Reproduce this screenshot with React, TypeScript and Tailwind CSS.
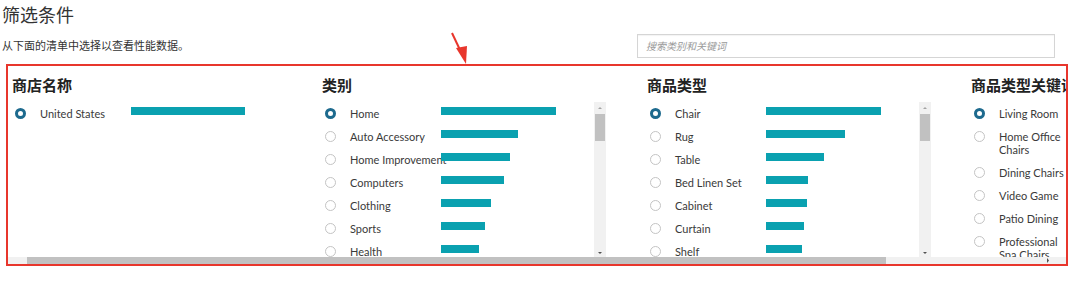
import React from 'react'

type Item = { label: string; bar: number; checked?: boolean }

type Column = {
  title: string
  width: string
  scroll: boolean
  wrap?: boolean
  items: Item[]
}

const COLUMNS: Column[] = [
  {
    title: '商店名称',
    width: 'w-[310px]',
    scroll: false,
    items: [{ label: 'United States', bar: 114, checked: true }],
  },
  {
    title: '类别',
    width: 'w-[325px]',
    scroll: true,
    items: [
      { label: 'Home', bar: 115, checked: true },
      { label: 'Auto Accessory', bar: 77 },
      { label: 'Home Improvement', bar: 69 },
      { label: 'Computers', bar: 63 },
      { label: 'Clothing', bar: 50 },
      { label: 'Sports', bar: 44 },
      { label: 'Health', bar: 38 },
      { label: 'Beauty', bar: 34 },
    ],
  },
  {
    title: '商品类型',
    width: 'w-[324px]',
    scroll: true,
    items: [
      { label: 'Chair', bar: 115, checked: true },
      { label: 'Rug', bar: 79 },
      { label: 'Table', bar: 58 },
      { label: 'Bed Linen Set', bar: 42 },
      { label: 'Cabinet', bar: 41 },
      { label: 'Curtain', bar: 38 },
      { label: 'Shelf', bar: 36 },
      { label: 'Lamp', bar: 32 },
    ],
  },
  {
    title: '商品类型关键词',
    width: 'w-[240px]',
    scroll: false,
    wrap: true,
    items: [
      { label: 'Living Room', bar: 115, checked: true },
      { label: 'Home Office Chairs', bar: 80 },
      { label: 'Dining Chairs', bar: 60 },
      { label: 'Video Game', bar: 50 },
      { label: 'Patio Dining', bar: 44 },
      { label: 'Professional Spa Chairs', bar: 38 },
    ],
  },
]

function Radio({ checked }: { checked?: boolean }) {
  return checked ? (
    <span className="mt-[1px] block h-[11px] w-[11px] shrink-0 rounded-full border-[3px] border-[#1d6a8e] bg-white" />
  ) : (
    <span className="mt-[1px] block h-[11px] w-[11px] shrink-0 rounded-full border border-[#c4c4c4] bg-white" />
  )
}

function VScroll() {
  return (
    <div className="flex w-[12px] shrink-0 flex-col items-center bg-[#f1f1f1]">
      <svg width="6" height="12" viewBox="0 0 6 12" className="shrink-0">
        <path d="M1 7 L3 5 L5 7 Z" fill="#a3a3a3" />
      </svg>
      <div className="h-[27px] w-[10px] bg-[#c1c1c1]" />
      <div className="flex-1" />
      <svg width="6" height="12" viewBox="0 0 6 12" className="shrink-0">
        <path d="M1 5 L3 7 L5 5 Z" fill="#505050" />
      </svg>
    </div>
  )
}

function List({ col }: { col: Column }) {
  return (
    <div className="flex h-[157px] overflow-hidden">
      <div className="flex w-[272px] shrink-0 flex-col overflow-hidden">
        {col.items.map((it) => (
          <div key={it.label} className="flex shrink-0 items-start py-[5px] pl-[3px]">
            <Radio checked={it.checked} />
            <span
              className={
                col.wrap
                  ? 'ml-[14px] w-[72px] shrink-0 text-[11px] leading-[13px] text-[#3a3a3a]'
                  : 'ml-[14px] w-[91px] shrink-0 whitespace-nowrap text-[11px] leading-[13px] text-[#3a3a3a]'
              }
              style={{ fontFamily: 'Lato, "Open Sans", sans-serif' }}
            >
              {it.label}
            </span>
            <div className="h-[8px] shrink-0 bg-[#0aa1b0]" style={{ width: it.bar }} />
          </div>
        ))}
      </div>
      {col.scroll && <VScroll />}
    </div>
  )
}

export default function App() {
  return (
    <div
      className="relative h-[289px] w-[1080px] overflow-hidden bg-white px-[2px] pt-[4px]"
      style={{ fontFamily: '"Open Sans", "Noto Sans CJK SC", sans-serif' }}
    >
      {/* Header */}
      <h1 className="text-[18px] leading-[22px] font-normal text-[#333]">筛选条件</h1>

      <div className="mt-[8px] flex h-[24px] items-center">
        <p className="text-[11px] text-[#333]">从下面的清单中选择以查看性能数据。</p>
        <div className="ml-auto mr-[23px] flex h-[24px] w-[418px] items-center border border-[#d5d5d5] px-[8px] shadow-[inset_0_1px_1px_rgba(0,0,0,0.05)]">
          <span className="text-[10px] italic text-[#9a9a9a]">搜索类别和关键词</span>
        </div>
      </div>

      {/* Filter box */}
      <div className="mt-[6px] ml-[4px] flex h-[202px] w-[1062px] flex-col overflow-hidden border-2 border-[#e8362c]">
        <div className="flex flex-1 overflow-hidden pl-[4px] pt-[9px]">
          {COLUMNS.map((col) => (
            <div key={col.title} className={`${col.width} shrink-0`}>
              <h2 className="whitespace-nowrap text-[15px] leading-[20px] font-bold text-[#222]">
                {col.title}
              </h2>
              <div className="mt-[7px]">
                <List col={col} />
              </div>
            </div>
          ))}
        </div>
        {/* horizontal scrollbar */}
        <div className="flex h-[7px] shrink-0 items-center bg-[#f1f1f1]">
          <div className="ml-[19px] h-[7px] w-[859px] bg-[#c1c1c1]" />
          <div className="flex-1" />
          <svg width="8" height="7" viewBox="0 0 8 7" className="mr-[14px]">
            <path d="M3 1 L5 3.5 L3 6 Z" fill="#505050" />
          </svg>
        </div>
      </div>

      {/* red pointer arrow */}
      <svg
        className="absolute left-[440px] top-[26px]"
        width="40"
        height="42"
        viewBox="440 26 40 42"
      >
        <line x1="452" y1="33" x2="461" y2="52" stroke="#e8362c" strokeWidth="2" />
        <polygon points="456,48 466,64 467,46" fill="#e8362c" />
      </svg>
    </div>
  )
}
